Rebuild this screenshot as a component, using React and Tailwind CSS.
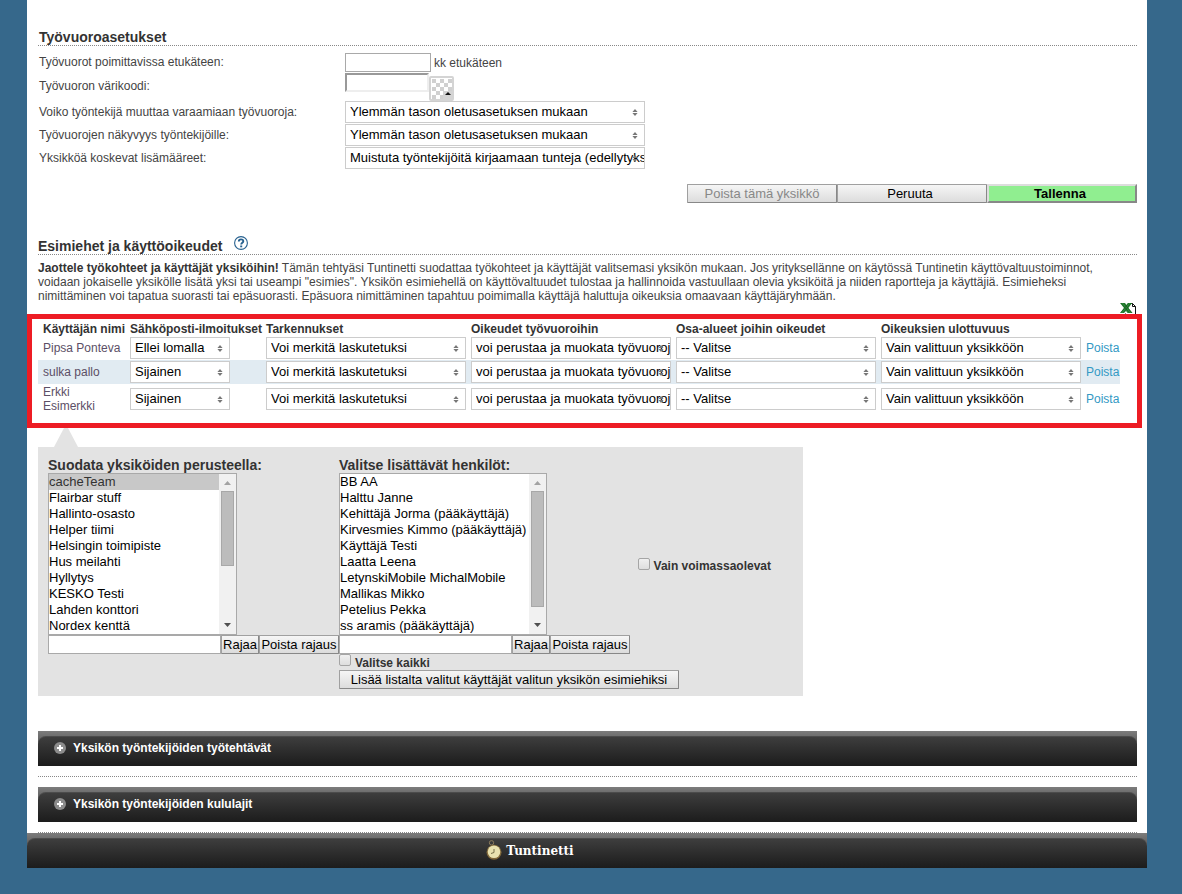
import React from 'react';

const INHERIT = 'Ylemmän tason oletusasetuksen mukaan';

const managers = [
  { name: 'Pipsa Ponteva', notify: 'Ellei lomalla' },
  { name: 'sulka pallo', notify: 'Sijainen' },
  { name: 'Erkki Esimerkki', notify: 'Sijainen' },
];

const columns = [
  { title: 'Käyttäjän nimi', width: 'w-[92px]' },
  { title: 'Sähköposti-ilmoitukset', width: 'w-[136px]' },
  { title: 'Tarkennukset', width: 'w-[205px]' },
  { title: 'Oikeudet työvuoroihin', width: 'w-[205px]' },
  { title: 'Osa-alueet joihin oikeudet', width: 'w-[205px]' },
  { title: 'Oikeuksien ulottuvuus', width: 'w-[205px]' },
];

const units = [
  'cacheTeam',
  'Flairbar stuff',
  'Hallinto-osasto',
  'Helper tiimi',
  'Helsingin toimipiste',
  'Hus meilahti',
  'Hyllytys',
  'KESKO Testi',
  'Lahden konttori',
  'Nordex kenttä',
];

const people = [
  'BB AA',
  'Halttu Janne',
  'Kehittäjä Jorma (pääkäyttäjä)',
  'Kirvesmies Kimmo (pääkäyttäjä)',
  'Käyttäjä Testi',
  'Laatta Leena',
  'LetynskiMobile MichalMobile',
  'Mallikas Mikko',
  'Petelius Pekka',
  'ss aramis (pääkäyttäjä)',
];

const Select = ({ id, label, value, width }) => (
  <span className={`relative block h-[22px] ${width}`}>
    <select
      id={id}
      aria-label={label}
      className="block w-full h-full appearance-none overflow-hidden whitespace-nowrap border border-[#ccc] bg-white pl-1 text-[13px] leading-5 text-black"
    >
      <option>{value}</option>
    </select>
    <svg className="pointer-events-none absolute right-[7px] top-2 w-[6px] h-[7px]" viewBox="0 0 6 7" fill="#777" aria-hidden="true">
      <path d="M3 0 L5.6 3 H0.4 Z M0.4 4 H5.6 L3 7 Z" />
    </svg>
  </span>
);

const Button = ({ children, className = '', disabled }) => (
  <button
    type="button"
    disabled={disabled}
    className={`h-[19px] whitespace-nowrap rounded-[1px] border border-[#a0a0a0] border-b-[#888] border-r-[#888] bg-linear-to-b from-[#f6f6f6] to-[#dcdcdc] text-[13px] leading-4 text-black disabled:text-[#888] ${className}`}
  >
    {children}
  </button>
);

const TextInput = ({ id, label, className }) => (
  <input id={id} type="text" aria-label={label} className={`block border border-[#a9a9a9] bg-white px-1 text-[13px] ${className}`} />
);

const Checkbox = ({ id }) => (
  <input
    id={id}
    type="checkbox"
    className="size-3 shrink-0 appearance-none rounded-[2px] border border-[#a5a5a5] bg-linear-to-b from-[#f0f0f0] to-[#dedede]"
  />
);

const ListBox = ({ id, items, selected, width, thumb }) => (
  <div className={`flex h-[162px] border border-[#a9a9a9] bg-white ${width}`}>
    <select id={id} multiple size={10} defaultValue={selected ? [selected] : []} className="block min-w-0 flex-1 overflow-hidden p-0 text-[13px] text-black outline-none">
      {items.map((item) => (
        <option key={item} className="h-4 min-h-0 p-0 leading-4 whitespace-nowrap checked:bg-[#c8c8c8] checked:text-[#333]">
          {item}
        </option>
      ))}
    </select>
    <div className="flex w-[17px] shrink-0 flex-col items-center bg-[#f1f1f1]" aria-hidden="true">
      <svg className="h-[17px] w-[17px] shrink-0" viewBox="0 0 17 17" fill="#a3a3a3">
        <path d="M8.5 7 L12 11 H5 Z" />
      </svg>
      <div className={`w-[13px] border border-[#a8a8a8] bg-[#bcbcbc] ${thumb}`} />
      <svg className="mt-auto h-[17px] w-[17px] shrink-0" viewBox="0 0 17 17" fill="#505050">
        <path d="M5 6 H12 L8.5 10 Z" />
      </svg>
    </div>
  </div>
);

const FilterColumn = ({ id, title, children, ...list }) => (
  <div>
    <label htmlFor={id} className="block h-[18px] text-sm leading-5 font-bold">{title}</label>
    <ListBox id={id} {...list} />
    <div className="flex">
      <TextInput id={`${id}-filter`} label="Rajaus" className="h-[19px] w-[173px]" />
      <Button className="w-[38px]">Rajaa</Button>
      <Button className="w-20">Poista rajaus</Button>
    </div>
    {children}
  </div>
);

const DarkBar = ({ children }) => (
  <div className="h-[35px] bg-linear-to-b from-[#7c7c7c] to-[#484848] to-60% pt-[5px]">
    <div className="flex h-[30px] items-center rounded-t-[8px] border-t border-[#4c4c4c] bg-linear-to-b from-[#3e3e3e] to-[#1c1c1c]">
      {children}
    </div>
  </div>
);

const Accordion = ({ title }) => (
  <div className="border-b border-dotted border-[#888] pb-2.5">
    <DarkBar>
      <button type="button" className="flex h-full w-full items-center gap-[7px] pb-2 pl-4 text-left text-xs font-bold text-white">
        <svg className="size-3" viewBox="0 0 12 12" aria-hidden="true">
          <circle cx="6" cy="6" r="6" fill="#8c8c8c" />
          <path d="M5 3h2v2h2v2H7v2H5V7H3V5h2z" fill="#fff" />
        </svg>
        {title}
      </button>
    </DarkBar>
  </div>
);

const Field = ({ id, label, height, children }) => (
  <div className={`flex ${height}`}>
    <label htmlFor={id} className="w-[307px] shrink-0 self-center pl-px pb-0.5">{label}</label>
    {children}
  </div>
);

const App = () => {
  return (
    <div className="min-h-screen bg-[#36688b] pl-[27px] pr-[35px] font-['Liberation_Sans',Arial,sans-serif] text-xs leading-[14px] text-[#444]">
      <main className="bg-white pl-[11px] pr-2.5 pt-7">
        <section>
          <h2 className="h-[18px] border-b border-dotted border-[#888] pl-px text-sm leading-[18px] font-bold text-[#333]">
            Työvuoroasetukset
          </h2>
          <div className="pt-[7px]">
            <Field id="advance" label="Työvuorot poimittavissa etukäteen:" height="h-5">
              <TextInput id="advance" className="h-[19px] w-[86px]" />
              <span className="self-center pl-[3px]">kk etukäteen</span>
            </Field>
            <Field id="color" label="Työvuoron värikoodi:" height="h-7">
              <input id="color" type="text" className="h-[19px] w-[84px] border-2 border-[#999] border-r-[#eee] border-b-[#eee] bg-white text-[13px]" />
              <button type="button" aria-label="Valitse väri" className="mt-[3px] size-[25px] rounded-[2px] border-2 border-[#d4d4d4] bg-white">
                <svg className="block size-[21px]" viewBox="0 0 21 21" aria-hidden="true">
                  <path
                    d="M1 1h4v4H1zM9 1h4v4H9zM17 1h4v4h-4zM5 5h4v4H5zM13 5h4v4h-4zM1 9h4v4H1zM9 9h4v4H9zM17 9h4v4h-4zM5 13h4v4H5zM1 17h4v4H1zM9 17h4v4H9z"
                    fill="#d0d0d0"
                  />
                  <path d="M12 13h9v8h-9z" fill="#d4d4d4" />
                  <path d="M17 14 L20 17 H14 Z" fill="#111" />
                </svg>
              </button>
            </Field>
            <Field id="change" label="Voiko työntekijä muuttaa varaamiaan työvuoroja:" height="h-[23px]">
              <Select id="change" value={INHERIT} width="w-[300px]" />
            </Field>
            <Field id="visibility" label="Työvuorojen näkyvyys työntekijöille:" height="h-[23px]">
              <Select id="visibility" value={INHERIT} width="w-[300px]" />
            </Field>
            <Field id="extras" label="Yksikköä koskevat lisämääreet:" height="h-[23px]">
              <Select id="extras" value="Muistuta työntekijöitä kirjaamaan tunteja (edellytyksenä)" width="w-[300px]" />
            </Field>
          </div>
          <div className="mt-3.5 flex justify-end">
            <Button className="w-[150px]" disabled>Poista tämä yksikkö</Button>
            <Button className="w-[150px] pr-1">Peruuta</Button>
            <button type="button" className="h-[19px] w-[150px] border-2 border-[#ddd] border-r-[#888] border-b-[#888] bg-[#90ee90] pr-1 text-[13px] leading-[14px] font-bold text-black">
              Tallenna
            </button>
          </div>
        </section>

        <section className="mt-[30px]">
          <h2 className="flex h-[22px] gap-3 border-b border-dotted border-[#888] text-sm leading-[26px] font-bold text-[#333]">
            Esimiehet ja käyttöoikeudet
            <svg className="mt-[3px] size-[14px]" viewBox="0 0 14 14" aria-label="Ohje">
              <circle cx="7" cy="7" r="6.4" fill="#fff" stroke="#27618f" strokeWidth="1.1" />
              <path d="M4.8 5.500 C4.8 2.7 9.3 2.8 9.3 5.2 C9.3 6.7 7.2 6.8 7.2 8.6" fill="none" stroke="#27618f" strokeWidth="1.9" />
              <path d="M6.2 9.500h2v1.8h-2z" fill="#27618f" />
            </svg>
          </h2>
          <p className="pt-1.5">
            <b className="text-[#333]">Jaottele työkohteet ja käyttäjät yksiköihin!</b> Tämän tehtyäsi Tuntinetti suodattaa työkohteet ja käyttäjät valitsemasi yksikön mukaan. Jos yrityksellänne on käytössä Tuntinetin käyttövaltuustoiminnot, voidaan jokaiselle yksikölle lisätä yksi tai useampi "esimies". Yksikön esimiehellä on käyttövaltuudet tulostaa ja hallinnoida vastuullaan olevia yksiköitä ja niiden raportteja ja käyttäjiä. Esimieheksi nimittäminen voi tapatua suorasti tai epäsuorasti. Epäsuora nimittäminen tapahtuu poimimalla käyttäjä haluttuja oikeuksia omaavaan käyttäjäryhmään.
          </p>
          <div className="flex h-[11px] justify-end">
            <a href="#excel" aria-label="Vie Exceliin" className="block h-[11px] overflow-hidden">
              <svg className="block h-4 w-[17px]" viewBox="0 0 17 16" aria-hidden="true">
                <path d="M4.500 .5h8l3 3v12h-11z" fill="#fff" />
                <path d="M9.500 .5h3l3 3v12M12.500 .5v3h3M5.500 15.500v-5" fill="none" stroke="#111" />
                <path d="M0 0h5l1.500 2L8 0h4L8.500 5l4 5h-5L6 8l-2 2H0l4-5z" fill="#2e8b3a" />
                <path d="M1 0l8.500 10M3.500 0L12 10M8.500 0L1 9.500M11 0L3.500 9.500" stroke="#145a1e" strokeWidth=".7" fill="none" />
              </svg>
            </a>
          </div>

          <div className="-ml-[11px] -mr-[5px] h-[114px] border-[5px] border-[#ed1c24] pt-[3px] pr-[17px] pl-1.5">
            <table className="w-full table-fixed border-collapse text-left">
              <thead>
                <tr className="h-[14px] text-[#333]">
                  {columns.map((col) => (
                    <th key={col.title} scope="col" className={`whitespace-nowrap p-0 first:pl-[5px] ${col.width}`}>{col.title}</th>
                  ))}
                  <td className="p-0" />
                </tr>
              </thead>
              <tbody>
                {managers.map((m) => (
                  <tr key={m.name} className="h-6 even:bg-[#e1ebf2] last:h-[30px]">
                    <td className="p-0 pl-[5px] pr-2 text-[#5c4f66]">{m.name}</td>
                    <td className="p-0"><Select label="Sähköposti-ilmoitukset" value={m.notify} width="w-[100px]" /></td>
                    <td className="p-0"><Select label="Tarkennukset" value="Voi merkitä laskutetuksi" width="w-[200px]" /></td>
                    <td className="p-0"><Select label="Oikeudet työvuoroihin" value="voi perustaa ja muokata työvuoroja" width="w-[200px]" /></td>
                    <td className="p-0"><Select label="Osa-alueet joihin oikeudet" value="-- Valitse" width="w-[200px]" /></td>
                    <td className="p-0"><Select label="Oikeuksien ulottuvuus" value="Vain valittuun yksikköön" width="w-[200px]" /></td>
                    <td className="p-0"><a href="#poista" className="text-[#3399c4]">Poista</a></td>
                  </tr>
                ))}
              </tbody>
            </table>
          </div>

          <svg className="ml-4 block h-[19px] w-6" viewBox="0 0 24 19" fill="#e3e3e3" aria-hidden="true">
            <path d="M10 0h4l10 19H0z" />
          </svg>
          <div className="flex w-[765px] max-w-full bg-[#e3e3e3] pt-2 pr-8 pb-[7px] pl-2.5 text-[#333]">
            <FilterColumn id="units" title="Suodata yksiköiden perusteella:" items={units} selected="cacheTeam" width="w-[189px]" thumb="h-[75px]" />
            <div className="flex flex-1 items-start justify-between">
              <div className="w-[291px]">
                <FilterColumn id="people" title="Valitse lisättävät henkilöt:" items={people} width="w-[208px]" thumb="h-[116px]">
                  <div className="flex h-4 gap-1">
                    <Checkbox id="all" />
                    <label htmlFor="all" className="pt-0.5 font-bold">Valitse kaikki</label>
                  </div>
                  <Button className="w-[340px]">Lisää listalta valitut käyttäjät valitun yksikön esimiehiksi</Button>
                </FilterColumn>
              </div>
              <div className="flex shrink-0 items-center gap-1 self-center pb-4">
                <Checkbox id="valid" />
                <label htmlFor="valid" className="whitespace-nowrap pt-1 font-bold">Vain voimassaolevat</label>
              </div>
            </div>
          </div>
        </section>

        <section className="flex flex-col gap-2.5 pt-[35px]">
          <Accordion title="Yksikön työntekijöiden työtehtävät" />
          <Accordion title="Yksikön työntekijöiden kululajit" />
        </section>
      </main>

      <footer>
        <DarkBar>
          <div className="flex w-full justify-center gap-1 pr-[114px] pb-2">
            <svg className="h-5 w-4" viewBox="0 0 16 20" aria-hidden="true">
              <circle cx="5.500" cy="2.800" r="2.200" fill="none" stroke="#8a7a5c" />
              <circle cx="8" cy="12.300" r="7.500" fill="#80683a" />
              <circle cx="8" cy="11.800" r="6.300" fill="#e9e2b0" />
              <path d="M8 12.500V9M8 12.500l-3 1" stroke="#77704a" fill="none" />
            </svg>
            <span className="self-center pt-0.5 font-['DejaVu_Serif',serif] text-xs font-bold text-white">Tuntinetti</span>
          </div>
        </DarkBar>
      </footer>
    </div>
  );
};

export default App;
